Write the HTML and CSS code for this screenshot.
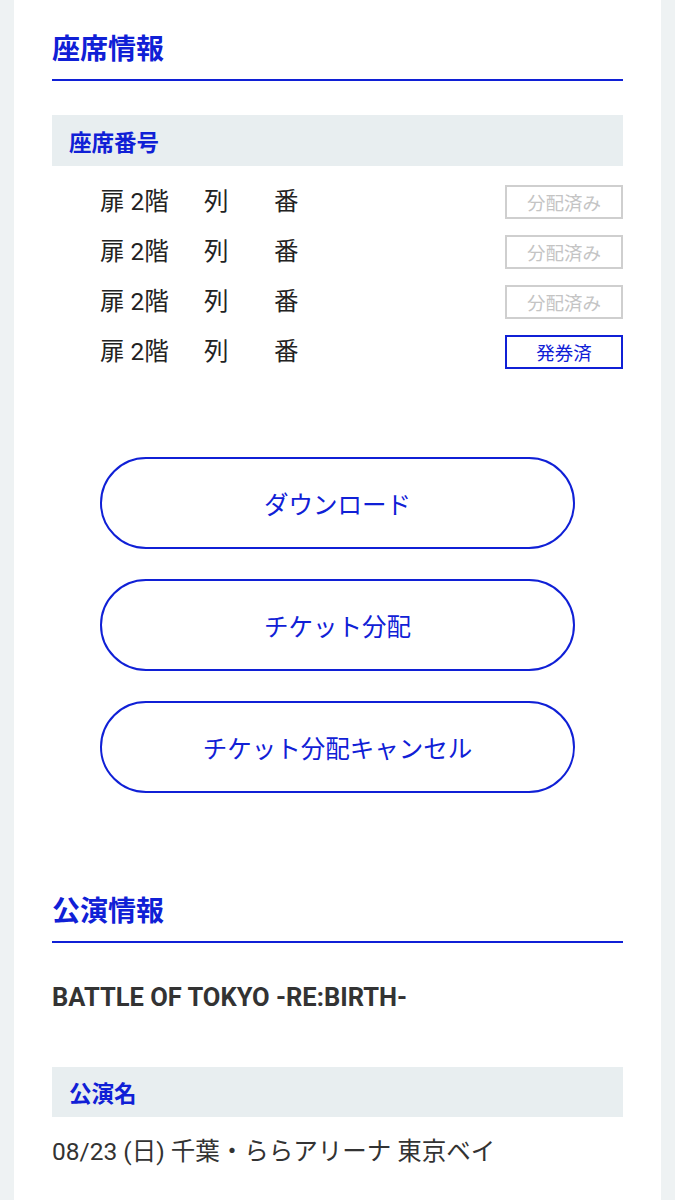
FILE: index.html
```html
<!DOCTYPE html>
<html lang="ja">
<head>
<meta charset="utf-8">
<link rel="stylesheet" href="styles.css">
</head>
<body>
<div class="card">
  <h2 class="sec-title">座席情報</h2>
  <div class="label-bar">座席番号</div>
  <div class="seats">
    <div class="seat"><span class="c1">扉 2階</span><span class="c2">列</span><span class="c3">番</span><span class="badge done">分配済み</span></div>
    <div class="seat"><span class="c1">扉 2階</span><span class="c2">列</span><span class="c3">番</span><span class="badge done">分配済み</span></div>
    <div class="seat"><span class="c1">扉 2階</span><span class="c2">列</span><span class="c3">番</span><span class="badge done">分配済み</span></div>
    <div class="seat"><span class="c1">扉 2階</span><span class="c2">列</span><span class="c3">番</span><span class="badge issued">発券済</span></div>
  </div>
  <div class="buttons">
    <button class="pill">ダウンロード</button>
    <button class="pill">チケット分配</button>
    <button class="pill">チケット分配キャンセル</button>
  </div>
  <h2 class="sec-title second">公演情報</h2>
  <p class="event">BATTLE OF TOKYO -RE:BIRTH-</p>
  <div class="label-bar bar2">公演名</div>
  <p class="perf">08/23 (日) 千葉・ららアリーナ 東京ベイ</p>
</div>
</body>
</html>
```
FILE: styles.css
```css
* { box-sizing: border-box; }
html, body { margin: 0; padding: 0; }
body {
  background: #eef2f3;
  font-family: Roboto, "Noto Sans CJK JP", sans-serif;
  color: #222;
}
.card {
  margin: 0 14px;
  background: #fff;
  min-height: 1200px;
  padding: 32px 38px 1px;
}
.sec-title {
  margin: 0;
  font-size: 28px;
  line-height: 36px;
  font-weight: 700;
  color: #1020d6;
  padding-bottom: 11px;
  border-bottom: 2px solid #1020d6;
}
.sec-title.second { margin-top: 101px; }
.label-bar {
  margin-top: 34px;
  height: 51px;
  background: #e8eef0;
  padding-left: 17px;
  display: flex;
  align-items: center;
  font-size: 22.5px;
  font-weight: 700;
  color: #1020d6;
}
.seats { margin-top: 8px; }
.seat {
  height: 50px;
  display: flex;
  align-items: center;
  padding-left: 48px;
  font-size: 24.5px;
  color: #222;
}
.c1 { width: 104px; }
.c2 { width: 70px; }
.c3 { flex: 1; }
.badge {
  width: 118px;
  height: 34px;
  margin-top: 6px;
  display: flex;
  align-items: center;
  justify-content: center;
  font-size: 18.5px;
  border: 2px solid;
}
.badge.done { border-color: #cfcfcf; color: #c4c4c4; }
.badge.issued { border-color: #1020d6; color: #1020d6; }
.buttons {
  margin-top: 83px;
  padding-left: 48px;
  display: flex;
  flex-direction: column;
  gap: 30px;
}
.pill {
  width: 475px;
  height: 92px;
  border: 2px solid #1020d6;
  border-radius: 46px;
  background: #fff;
  color: #1020d6;
  font-family: Roboto, "Noto Sans CJK JP", sans-serif;
  font-size: 24.5px;
  padding: 0;
}
.event {
  margin: 39px 0 0;
  font-size: 25.5px;
  line-height: 30px;
  font-weight: 700;
  color: #333;
}
.bar2 { margin-top: 55px; height: 50px; }
.perf {
  margin: 20px 0 0;
  font-size: 24.5px;
  line-height: 30px;
  color: #333;
}
```
